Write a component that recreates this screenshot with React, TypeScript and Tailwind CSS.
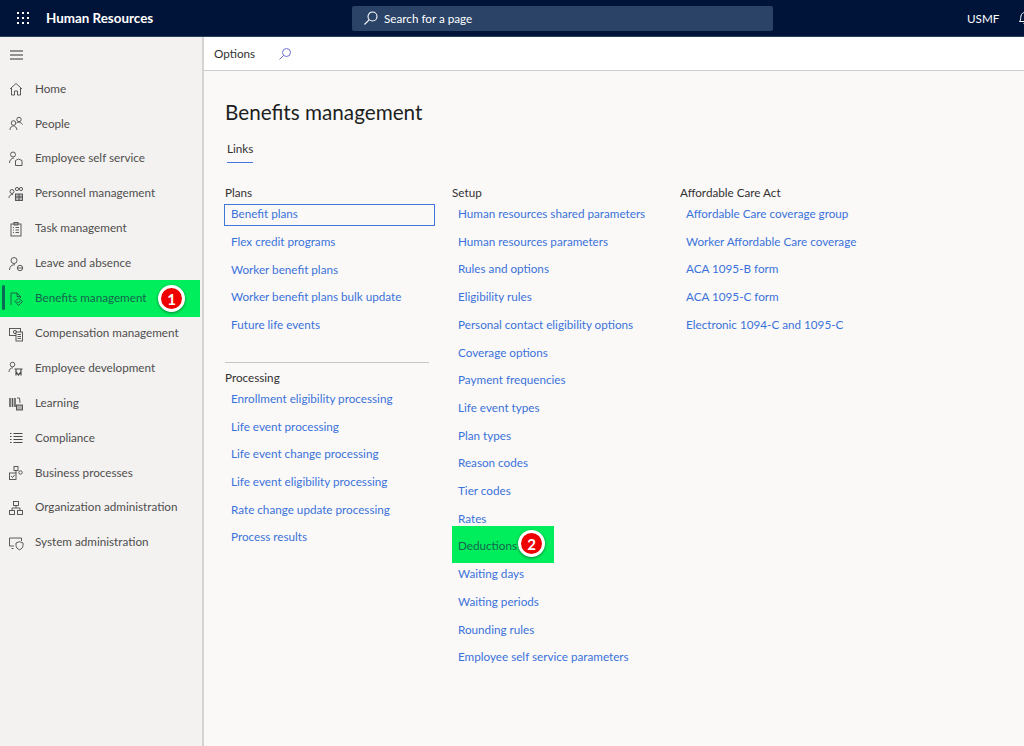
import type { ReactNode } from 'react';

const icon = (children: ReactNode) => (
  <svg width="16" height="16" viewBox="0 0 16 16" fill="none" stroke="#4a4a4a" strokeWidth="0.9">
    {children}
  </svg>
);

const navItems: { label: string; icon: ReactNode }[] = [
  { label: 'Home', icon: icon(<path d="M2 8 L8 2.5 L14 8 M3.5 7 V14 H6.5 V10 H9.5 V14 H12.5 V7" />) },
  { label: 'People', icon: icon(<><circle cx="5.5" cy="7" r="2.3" /><path d="M2 14 C2 11 4 10 5.5 10 C7 10 8.5 11 9 14" /><circle cx="11" cy="3.5" r="2.2" /><path d="M8.5 7 C10 5.8 13 6 14.5 8.5" /></>) },
  { label: 'Employee self service', icon: icon(<><circle cx="5" cy="3.5" r="2.5" /><path d="M1.5 12 C1.5 9 3.5 7 6 7" /><path d="M7.5 9.5 L10.5 8 L14 9.5 V14.5 H7.5 Z" /></>) },
  { label: 'Personnel management', icon: icon(<><circle cx="4" cy="5.5" r="2" /><path d="M1 12 C1 9.5 2.5 8.5 5 8.5" /><circle cx="9" cy="3" r="1.6" /><circle cx="13" cy="3" r="1.6" /><rect x="7.5" y="8" width="7" height="6.5" fill="#4a4a4a" fillOpacity="0.35" /><path d="M7.5 11 H14.5 M11 8 V14.5" /></>) },
  { label: 'Task management', icon: icon(<><rect x="3" y="3" width="10" height="12" /><rect x="6" y="1.5" width="4" height="2.5" /><path d="M5 6.5 H6 M7.5 6.5 H11 M5 9 H6 M7.5 9 H11 M5 11.5 H6 M7.5 11.5 H11" /></>) },
  { label: 'Leave and absence', icon: icon(<><circle cx="6" cy="4.5" r="3" /><path d="M1.5 14 C1.5 10.5 3.5 8.7 7 8.7" /><circle cx="12" cy="12" r="2.7" /><path d="M10 12 H14" /></>) },
  { label: 'Benefits management', icon: icon(<><path d="M3 14 V2 H9 L12.5 5.5 V7" stroke="#1f5a46" /><path d="M9 2 V5.5 H12.5" stroke="#1f5a46" /><path d="M7 10.5 L10.5 7 L14.5 10.5 L10.5 14.5 Z" stroke="#1f5a46" /><path d="M9 10.5 L10.3 12 L12.5 9.8" stroke="#1f5a46" /></>) },
  { label: 'Compensation management', icon: icon(<><rect x="1.5" y="2.5" width="11" height="7" /><circle cx="7" cy="6" r="1.6" /><rect x="8" y="6" width="6.5" height="9" fill="#f3f2f1" /><path d="M9.5 8.5 H13 M9.5 10.5 H13 M9.5 12.5 H13" /></>) },
  { label: 'Employee development', icon: icon(<><circle cx="4.5" cy="3.5" r="2.3" /><path d="M1 11 C1 8.5 2.5 6.8 5 6.8" /><path d="M6.5 8 H14.5 M8 8 V14.5 M13 8 V14.5 M8 11 L10.5 14 L13 11" strokeWidth="1.2" /></>) },
  { label: 'Learning', icon: icon(<><path d="M2 2 V11 M4.5 2 V11 M7 2 V11" strokeWidth="1.6" stroke="#5a5a5a" /><path d="M9 2 L11.5 2 L12 7" /><rect x="8.5" y="9" width="6" height="5" fill="#4a4a4a" fillOpacity="0.4" /></>) },
  { label: 'Compliance', icon: icon(<path d="M5.5 3.5 H14.5 M5.5 6.5 H14.5 M5.5 9.5 H14.5 M5.5 12.5 H14.5 M2 3.5 H3.5 M2 6.5 H3.5 M2 9.5 H3.5 M2 12.5 H3.5" strokeWidth="1.1" />) },
  { label: 'Business processes', icon: icon(<><rect x="6" y="1.5" width="4" height="4" /><rect x="1.5" y="8" width="6.5" height="6.5" /><path d="M3 11 L4.5 12.5 L6.7 9.8" /><circle cx="12.5" cy="7.5" r="1.7" /><path d="M8 5.5 V8" /></>) },
  { label: 'Organization administration', icon: icon(<><rect x="5.5" y="1.5" width="5" height="4" /><rect x="1.5" y="10.5" width="5" height="4" /><rect x="9.5" y="10.5" width="5" height="4" /><path d="M8 5.5 V8 M4 10.5 V8 H12 V10.5" /></>) },
  { label: 'System administration', icon: icon(<><path d="M6 11 H1.5 V3 H13.5 V6" /><path d="M3.5 13.5 H5.5" /><path d="M8 8 L11.5 6.7 L15 8 V10.5 C15 12.5 13.5 14 11.5 14.8 C9.5 14 8 12.5 8 10.5 Z" /></>) },
];

const plans = ['Flex credit programs', 'Worker benefit plans', 'Worker benefit plans bulk update', 'Future life events'];
const processing = [
  'Enrollment eligibility processing',
  'Life event processing',
  'Life event change processing',
  'Life event eligibility processing',
  'Rate change update processing',
  'Process results',
];
const setupTop = [
  'Human resources shared parameters',
  'Human resources parameters',
  'Rules and options',
  'Eligibility rules',
  'Personal contact eligibility options',
  'Coverage options',
  'Payment frequencies',
  'Life event types',
  'Plan types',
  'Reason codes',
  'Tier codes',
  'Rates',
];
const setupBottom = ['Waiting days', 'Waiting periods', 'Rounding rules', 'Employee self service parameters'];
const aca = [
  'Affordable Care coverage group',
  'Worker Affordable Care coverage',
  'ACA 1095-B form',
  'ACA 1095-C form',
  'Electronic 1094-C and 1095-C',
];

function Badge({ n }: { n: number }) {
  return (
    <span className="flex h-[27px] w-[27px] items-center justify-center rounded-full border-[3px] border-white bg-[#ee0000] text-[15px] font-bold text-white shadow-[0_1px_3px_rgba(0,0,0,0.45)]">
      {n}
    </span>
  );
}

function LinkRow({ label }: { label: string }) {
  return (
    <div className="flex h-[27.7px] items-center pb-[2px] pl-[6px] text-[#3b72d9] whitespace-nowrap">{label}</div>
  );
}

function GroupLabel({ label }: { label: string }) {
  return <div className="flex h-[20px] items-center pb-[2px] text-[#323130]">{label}</div>;
}

export default function App() {
  return (
    <div className="flex h-[746px] w-[1024px] flex-col overflow-hidden bg-[#faf9f8] text-[11.7px] font-['Lato','Noto_Sans',sans-serif]">
      <header className="relative flex h-[37px] shrink-0 items-center overflow-hidden border-b border-[#2a3f5f] bg-[#00143a] text-white">
        <div className="flex w-[46px] shrink-0 justify-center pr-[1px]">
          <svg width="14" height="14" viewBox="0 0 14 14" fill="white">
            {[1, 6, 11].flatMap((y) =>
              [1, 6, 11].map((x) => <rect key={`${x}-${y}`} x={x} y={y} width="2" height="2" />),
            )}
          </svg>
        </div>
        <div className="w-[306px] shrink-0 pt-[1px] text-[13.4px] font-bold">Human Resources</div>
        <div className="flex h-[25px] w-[421px] shrink-0 items-center gap-[5px] rounded-[2px] bg-[#2a4366] pl-[11px]">
          <svg width="16" height="16" viewBox="0 0 16 16" fill="none" stroke="white" strokeWidth="1.1">
            <circle cx="9.5" cy="6.5" r="4.5" />
            <path d="M6.3 9.7 L1.5 14.5" />
          </svg>
          <span className="pt-[1px]">Search for a page</span>
        </div>
        <div className="ml-[194px] w-[32px] shrink-0 pt-[1px]">USMF</div>
        <svg className="ml-[19px] shrink-0" width="14" height="14" viewBox="0 0 14 14" fill="none" stroke="white" strokeWidth="1">
          <path d="M1.5 10.5 C3 9 2.5 6.5 3 5 C3.5 2.5 5 1.5 7 1.5 C9 1.5 10.5 2.5 11 5 C11.5 6.5 11 9 12.5 10.5 Z M5.5 12.5 H8.5" />
        </svg>
      </header>

      <div className="flex min-h-0 flex-1">
        <aside className="w-[204px] shrink-0 border-r-2 border-[#d6d4d2] bg-[#f3f2f1]">
          <div className="flex h-[35px] items-center pl-[10px]">
            <svg width="13" height="10" viewBox="0 0 13 10" stroke="#333" strokeWidth="1">
              <path d="M0 1 H13 M0 5 H13 M0 9 H13" />
            </svg>
          </div>
          <nav className="w-[200px]">
            {navItems.map((item) => {
              const active = item.label === 'Benefits management';
              return (
                <div
                  key={item.label}
                  className={`relative flex items-center pl-[8px] ${active ? 'h-[37px] my-[-1px] bg-[#00ee5c]' : 'h-[34.9px]'}`}
                >
                  {active && <span className="absolute left-[2px] top-[5px] h-[25px] w-[3px] rounded-sm bg-[#0b6a55]" />}
                  <span className="mr-[11px] flex w-[16px] justify-center">{item.icon}</span>
                  <span className={`pb-[2px] ${active ? 'text-[#15664f]' : 'text-[#4f4e4d]'}`}>{item.label}</span>
                  {active && (
                    <span className="absolute left-[158px] top-[5px]">
                      <Badge n={1} />
                    </span>
                  )}
                </div>
              );
            })}
          </nav>
        </aside>

        <div className="flex min-w-0 flex-1 flex-col">
          <div className="flex h-[34px] shrink-0 items-center border-b border-[#d0cecc] bg-white pl-[10px]">
            <span className="pt-[1px] text-[#323130]">Options</span>
            <svg className="ml-[23px]" width="14" height="14" viewBox="0 0 14 14" fill="none" stroke="#6f6fd8" strokeWidth="1">
              <circle cx="8.5" cy="5.5" r="4" />
              <path d="M5.6 8.4 L1.5 12.5" />
            </svg>
          </div>

          <main className="pl-[21px] pt-[28px]">
            <h1 className="text-[20.7px] leading-[27px] font-normal text-[#201f1e]">Benefits management</h1>
            <div className="mt-[14px] ml-[2px] w-[26px]">
              <div className="flex h-[20px] items-center pb-[2px] text-[#323130]">Links</div>
              <div className="mt-[2px] h-[1px] w-[26px] bg-[#4a78d8]" />
            </div>

            <div className="mt-[21px] flex">
              <section className="w-[227px]">
                <GroupLabel label="Plans" />
                <div className="-ml-[1px] flex h-[22px] w-[211px] items-center border border-[#3f78d8] pb-[2px] pl-[6px] text-[#3b72d9]">Benefit plans</div>
                <div className="mt-[3px] w-[210px]">
                  {plans.map((p) => (
                    <LinkRow key={p} label={p} />
                  ))}
                </div>
                <div className="mt-[22px] h-[1px] w-[204px] bg-[#c8c6c4]" />
                <div className="mt-[6px]">
                  <GroupLabel label="Processing" />
                </div>
                <div className="mt-[-3px]">
                  {processing.map((p) => (
                    <LinkRow key={p} label={p} />
                  ))}
                </div>
              </section>

              <section className="w-[228px]">
                <GroupLabel label="Setup" />
                <div className="mt-[-3px]">
                  {setupTop.map((p) => (
                    <LinkRow key={p} label={p} />
                  ))}
                  <div className="relative -mt-[7px] -mb-[2px] flex h-[37px] w-[102px] items-center bg-[#00ee5c] pl-[6px] pt-[3px] text-[#15664f]">
                    Deductions
                    <span className="absolute left-[66px] top-[4px]">
                      <Badge n={2} />
                    </span>
                  </div>
                  {setupBottom.map((p) => (
                    <LinkRow key={p} label={p} />
                  ))}
                </div>
              </section>

              <section>
                <GroupLabel label="Affordable Care Act" />
                <div className="mt-[-3px]">
                  {aca.map((p) => (
                    <LinkRow key={p} label={p} />
                  ))}
                </div>
              </section>
            </div>
          </main>
        </div>
      </div>
    </div>
  );
}
